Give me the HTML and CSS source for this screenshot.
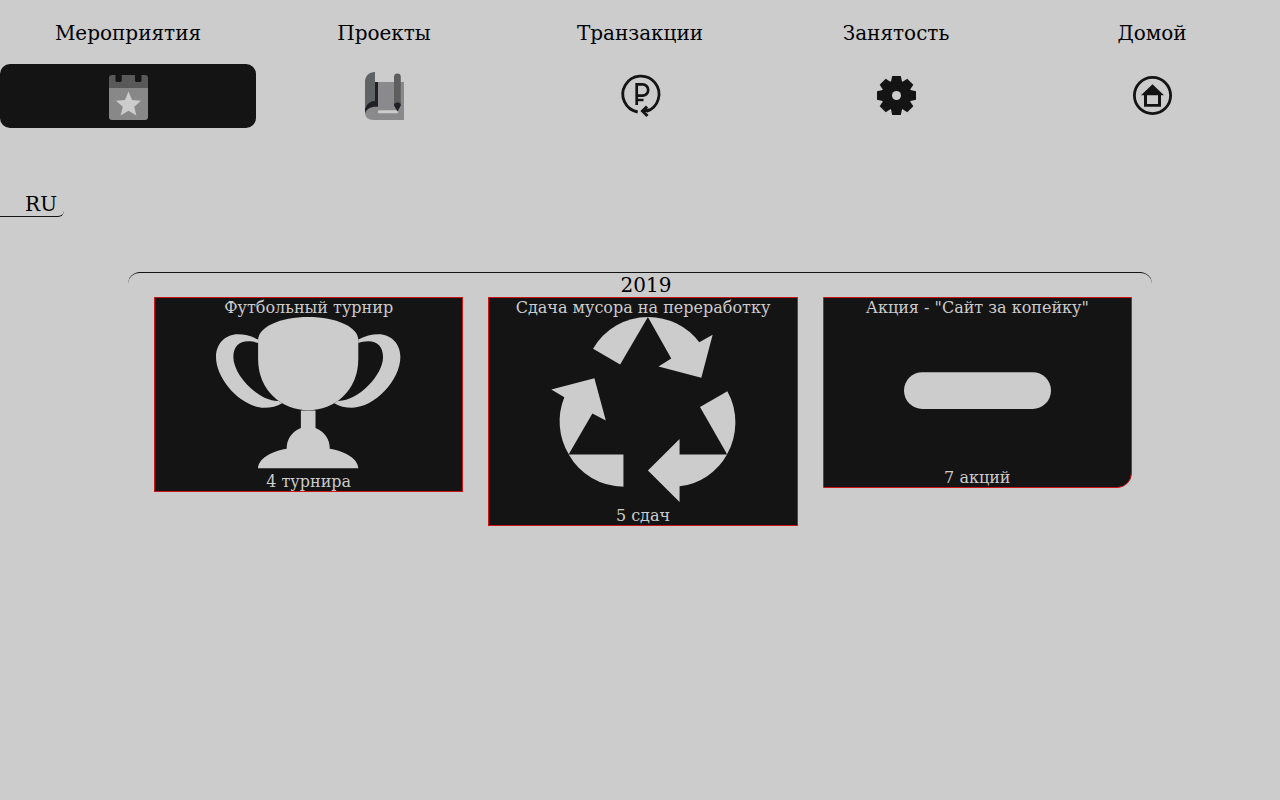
FILE: index.html
```html
<!DOCTYPE html>
<html lang="ru">
<head>
<meta charset="utf-8">
<meta name="viewport" content="width=device-width, initial-scale=1">
<title>Мероприятия</title>
<link rel="stylesheet" href="styles.css">
</head>
<body>
<nav class="nav">
  <a class="nav-item nav-item-active" href="#events">
    <span class="nav-label">Мероприятия</span>
    <span class="nav-icon">
      <svg class="icon" viewBox="0 0 48 64" aria-hidden="true">
        <path fill="#888888" d="M5 24H44V53Q44 56 41 56H8Q5 56 5 53Z"/>
        <path fill="#595959" d="M5 24V14Q5 11 8 11H11.5V16.5Q11.5 18 13 18H16.2Q17.7 18 17.7 16.5V11H31V16.5Q31 18 32.5 18H36Q37.5 18 37.5 16.5V11H41Q44 11 44 14V24Z"/>
        <path fill="#cccccc" d="M24.5 27.5L28 36L37 36.8L30.2 42.8L32.4 51.4L24.5 46.8L16.6 51.4L18.8 42.8L12 36.8L21 36Z"/>
      </svg>
    </span>
  </a>
  <a class="nav-item" href="#projects">
    <span class="nav-label">Проекты</span>
    <span class="nav-icon">
      <svg class="icon" viewBox="0 0 48 64" aria-hidden="true">
        <path fill="#8a8a8c" d="M15 18H44V56H14C8 56 5 53 5 48.5C6.5 45 10 42 15 42Z"/>
        <path fill="#1f1f26" d="M15 18H18V42.7H16C10 42.7 6.5 45 5 49.5V44C6.5 40 10 36.5 15 36.5Z"/>
        <path fill="#606264" d="M15 8V37C10 37 6.5 40 5 45V18C5 12 9 8 15 8Z"/>
        <rect fill="#cccccc" x="18" y="46.3" width="20" height="3" rx="1"/>
        <path fill="#5e5e5e" d="M34 13A3.4 3.4 0 0 1 40.8 13V41H34Z"/>
        <path fill="#1f1f26" d="M34 41.5Q34 38.5 37.5 38.5T40.8 41.5L37.5 47.5Z"/>
      </svg>
    </span>
  </a>
  <a class="nav-item" href="#transactions">
    <span class="nav-label">Транзакции</span>
    <span class="nav-icon">
      <svg class="icon" viewBox="0 0 48 64" fill="none" stroke="#141414" aria-hidden="true">
        <path stroke-width="2.8" d="M21.7 48A18.1 18.1 0 1 1 30.5 47.4"/>
        <path stroke-width="3" d="M31 42.5L26.5 47L31.5 52M26.5 47L33 46"/>
        <path stroke-width="2.7" d="M20.7 41V20.3H26.5A5.6 5.6 0 0 1 26.5 31.7H20.7M20.7 36H27.5"/>
      </svg>
    </span>
  </a>
  <a class="nav-item" href="#employment">
    <span class="nav-label">Занятость</span>
    <span class="nav-icon">
      <svg class="icon" viewBox="0 0 48 64" aria-hidden="true">
        <g fill="#141414">
          <circle cx="24.5" cy="31.5" r="15"/>
          <path id="tooth" d="M18.5 20L20.2 12H28.8L30.5 20V43L28.8 51H20.2L18.5 43Z"/>
          <use href="#tooth" transform="rotate(45 24.5 31.5)"/>
          <use href="#tooth" transform="rotate(90 24.5 31.5)"/>
          <use href="#tooth" transform="rotate(135 24.5 31.5)"/>
        </g>
        <circle fill="#cccccc" cx="24.5" cy="31.5" r="4.5"/>
      </svg>
    </span>
  </a>
  <a class="nav-item" href="#home">
    <span class="nav-label">Домой</span>
    <span class="nav-icon">
      <svg class="icon" viewBox="0 0 48 64" aria-hidden="true">
        <circle fill="none" stroke="#141414" stroke-width="2.8" cx="24.5" cy="31.5" r="18.1"/>
        <path fill="#141414" fill-rule="evenodd" d="M24.5 20.3L36 31.3H33V42.7H16V31.3H13ZM19 31.3V40H30V31.3Z"/>
      </svg>
    </span>
  </a>
</nav>

<button class="language" type="button">RU</button>

<main class="year">
  <h1 class="year-title">2019</h1>
  <div class="cards">
    <article class="card">
      <h2 class="card-text">Футбольный турнир</h2>
      <svg class="picture picture-cup" viewBox="0 0 184 151" fill="#cccccc" aria-hidden="true">
        <path d="M42 23C42 10 64 0 92 0S142 10 142 23V42C142 74 118 93 92 93S42 74 42 42Z"/>
        <path id="handle" d="M42 22.5C35 19 29 17.3 22 17.3C9 17.3 0 27 0 40C0 63 26 90.5 48 90.5C55 90.5 61 89 66 86L62 83.7C42 84 17.3 58 17.3 40C17.3 30 23 24.3 32 24.3C36 24.3 39 25 42 26Z"/>
        <use href="#handle" transform="matrix(-1 0 0 1 184 0)"/>
        <path d="M84.7 93.4H99.3V110.8A21.5 21.5 0 0 1 113.5 131.4C130 134 142 142 142 151H42C42 142 54 134 70.5 131.4A21.5 21.5 0 0 1 84.7 110.8Z"/>
      </svg>
      <p class="card-text">4 турнира</p>
    </article>
    <article class="card">
      <h2 class="card-text">Сдача мусора на переработку</h2>
      <svg class="picture picture-recycle" viewBox="0 0 184 185" fill="#cccccc" aria-hidden="true">
        <path d="M96.7 0A63 63 0 0 0 42 31.7L69 47.3Z"/>
        <path d="M96.7 0A64 64 0 0 1 148 25.3L161.3 17.7L150 60.7L107.3 49.3L120 41.3Z"/>
        <path d="M176 74L148.7 89.7L175.7 137A65 65 0 0 0 176 74Z"/>
        <path d="M175.7 137.3A63 63 0 0 1 128.3 169V184.7L96.7 153.3L128.3 121.7V137.3Z"/>
        <path d="M17.7 137.3H72.3V169.3A63 63 0 0 1 17.7 137.3Z"/>
        <path d="M17.7 137A64 64 0 0 1 13.3 80L0.3 72.3L43.3 61L54.7 103.3L41.3 96.3Z"/>
      </svg>
      <p class="card-text">5 сдач</p>
    </article>
    <article class="card card-last">
      <h2 class="card-text">Акция - "Сайт за копейку"</h2>
      <svg class="picture picture-bar" viewBox="0 0 147 147" fill="#cccccc" aria-hidden="true">
        <rect y="55.2" width="147" height="36.8" rx="18.4"/>
      </svg>
      <p class="card-text">7 акций</p>
    </article>
  </div>
</main>
</body>
</html>
```
FILE: styles.css
```css
* {
  box-sizing: border-box;
}

body {
  margin: 0;
  background: #cccccc;
  color: #000000;
  font-family: "DejaVu Serif", serif;
  font-size: 16px;
}

.nav {
  display: grid;
  grid-template-columns: repeat(5, 1fr);
}

.nav-item {
  color: inherit;
  font-size: 20px;
  text-align: center;
  text-decoration: none;
}

.nav-label {
  display: block;
  padding-top: 2px;
  line-height: 62px;
}

.nav-icon {
  display: flex;
  justify-content: center;
  border-radius: 10px;
}

.nav-item-active .nav-icon {
  background: #141414;
}

.icon {
  width: 48px;
  height: 64px;
}

.language {
  display: block;
  width: 5%;
  margin: 64px 0 55px;
  padding: 0 7px 0 0;
  border: 0 solid #141414;
  border-bottom-width: 1px;
  border-bottom-right-radius: 6px;
  background: none;
  color: inherit;
  font: inherit;
  font-size: 20px;
  line-height: 24px;
  text-align: right;
}

.year {
  width: 80%;
  margin: 0 auto;
  border-top: 1px solid #141414;
  border-radius: 12px;
}

.year-title {
  margin: 0;
  padding-left: 12px;
  font-size: 20px;
  font-weight: normal;
  line-height: 24px;
  text-align: center;
}

.cards {
  display: grid;
  grid-template-columns: repeat(3, 1fr);
  align-items: start;
  gap: 25px;
  padding: 0 20px 0 26px;
}

.card {
  border: 1px solid #cc1414;
  background: #141414;
  color: #cccccc;
  text-align: center;
}

.card-last {
  border-bottom-right-radius: 15px;
}

.card-text {
  margin: 0;
  font-size: 16px;
  font-weight: normal;
  line-height: 19px;
}

.picture {
  display: block;
  margin: 0 auto 4px;
  overflow: visible;
}

.picture-cup,
.picture-recycle {
  width: 60%;
}

.picture-bar {
  width: 147px;
  max-width: 100%;
}
```
